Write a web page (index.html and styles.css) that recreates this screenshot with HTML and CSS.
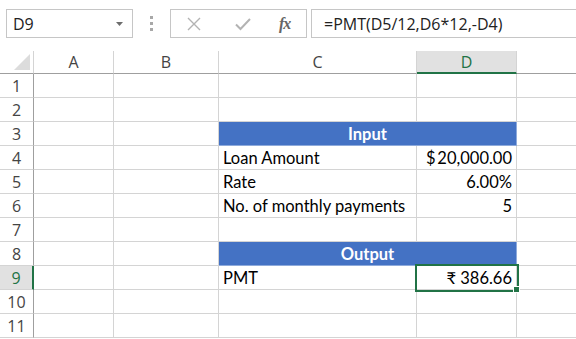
FILE: index.html
```html
<!DOCTYPE html>
<html lang="en">
<head>
    <meta charset="UTF-8">
    <title>PMT - Sheet</title>
    <link rel="stylesheet" href="styles.css">
</head>
<body>
    <div class="bar">
        <div class="namebox">
            <span>D9</span>
            <svg class="caret" width="7" height="4" viewBox="0 0 7 4"><path d="M0 0h7L3.5 4z" fill="#6d6d6d"/></svg>
        </div>
        <div class="grip"><i></i><i></i><i></i></div>
        <div class="btns">
            <svg width="14" height="14" viewBox="0 0 14 14"><path d="M1 1L13 13M13 1L1 13" stroke="#b3b3b3" stroke-width="1.4"/></svg>
            <svg width="16" height="14" viewBox="0 0 16 14"><path d="M1 7.5L5.5 12L15 2" stroke="#b3b3b3" stroke-width="2" fill="none"/></svg>
            <span class="fx">fx</span>
        </div>
        <div class="formula">=PMT(D5/12,D6*12,-D4)</div>
    </div>

    <div class="sheet">
        <div class="row head">
            <div class="rh corner"><span class="tri"></span></div>
            <div class="c a">A</div>
            <div class="c b">B</div>
            <div class="c cc">C</div>
            <div class="c d sel">D</div>
            <div class="c e"></div>
        </div>
        <div class="row"><div class="rh">1</div><div class="c a"></div><div class="c b"></div><div class="c cc"></div><div class="c d"></div><div class="c e"></div></div>
        <div class="row"><div class="rh">2</div><div class="c a"></div><div class="c b"></div><div class="c cc"></div><div class="c d"></div><div class="c e"></div></div>
        <div class="row"><div class="rh">3</div><div class="c a"></div><div class="c b"></div><div class="c merged">Input</div><div class="c e"></div></div>
        <div class="row"><div class="rh">4</div><div class="c a"></div><div class="c b"></div><div class="c cc">Loan Amount</div><div class="c d num money"><span>$</span><span>20,000.00</span></div><div class="c e"></div></div>
        <div class="row"><div class="rh">5</div><div class="c a"></div><div class="c b"></div><div class="c cc">Rate</div><div class="c d num">6.00%</div><div class="c e"></div></div>
        <div class="row"><div class="rh">6</div><div class="c a"></div><div class="c b"></div><div class="c cc">No. of monthly payments</div><div class="c d num">5</div><div class="c e"></div></div>
        <div class="row"><div class="rh">7</div><div class="c a"></div><div class="c b"></div><div class="c cc"></div><div class="c d"></div><div class="c e"></div></div>
        <div class="row"><div class="rh">8</div><div class="c a"></div><div class="c b"></div><div class="c merged">Output</div><div class="c e"></div></div>
        <div class="row"><div class="rh active">9</div><div class="c a"></div><div class="c b"></div><div class="c cc">PMT</div><div class="c d num cur">₹ 386.66<span class="handle"></span></div><div class="c e"></div></div>
        <div class="row"><div class="rh">10</div><div class="c a"></div><div class="c b"></div><div class="c cc"></div><div class="c d"></div><div class="c e"></div></div>
        <div class="row"><div class="rh">11</div><div class="c a"></div><div class="c b"></div><div class="c cc"></div><div class="c d"></div><div class="c e"></div></div>
    </div>
</body>
</html>
```

FILE: styles.css
```css
body { margin: 0; background: #fff; font-family: "Open Sans", "Noto Sans", sans-serif; color: #222; overflow: hidden; }

.bar { display: flex; align-items: flex-start; height: 51px; padding: 9px 0 0 6px; box-sizing: border-box; }
.namebox { width: 127px; height: 29px; box-sizing: border-box; border: 1px solid #c6c6c6; display: flex; align-items: center; justify-content: space-between; padding: 0 9px 0 6px; font-size: 16px; color: #222; }
.grip { width: 37px; height: 29px; display: flex; flex-direction: column; align-items: center; justify-content: center; gap: 3px; }
.grip i { display: block; width: 3px; height: 3px; background: #a8a8a8; }
.btns { width: 137px; height: 29px; box-sizing: border-box; border: 1px solid #c6c6c6; display: flex; align-items: center; padding-left: 16px; }
.btns svg:nth-child(2) { margin-left: 34px; }
.fx { margin-left: 28px; font-family: "Liberation Serif", serif; font-style: italic; font-weight: bold; font-size: 16px; color: #666; letter-spacing: -1px; }
.formula { flex: 1; height: 29px; box-sizing: border-box; border: 1px solid #c6c6c6; border-right: none; margin-left: 4px; display: flex; align-items: center; padding-left: 12px; font-size: 16px; color: #222; }

.sheet { font-family: "Lato", "Liberation Sans", sans-serif; font-size: 16.5px; color: #000; }
.row { display: flex; height: 24px; }
.row > div { box-sizing: border-box; height: 24px; border-right: 1px solid #d4d4d4; border-bottom: 1px solid #d4d4d4; }
.rh { width: 34px; border-right: 1px solid #9f9f9f !important; display: flex; align-items: center; justify-content: center; font-family: "Open Sans", sans-serif; font-size: 16px; color: #444; }
.c { display: flex; align-items: center; padding: 0 4px; }
.a { width: 80px; }
.b { width: 105px; }
.cc { width: 198px; }
.d { width: 100px; }
.e { flex: 1; border-right: none !important; }
.merged { width: 298px; background: #4472c4; color: #fff; font-weight: bold; justify-content: center; border-color: #8eaadb !important; }

.head { height: 23px; }
.head > div { height: 23px; border-bottom: 1px solid #9f9f9f; justify-content: center; font-family: "Open Sans", sans-serif; color: #444; font-size: 16px; }
.head .rh { border-right: 1px solid #d4d4d4 !important; }
.corner { position: relative; }
.tri { position: absolute; right: 3px; bottom: 3px; width: 0; height: 0; border-left: 16px solid transparent; border-bottom: 16px solid #dcdcdc; }
.head .sel { background: #e1e1e1; border-bottom: 2px solid #217346; color: #217346; }

.num { justify-content: flex-end; }
.money { justify-content: space-between; padding-left: 9px; }
.rh.active { background: #e1e1e1; border-right: 2px solid #217346 !important; color: #217346; }
.cur { position: relative; z-index: 1; outline: 2px solid #217346; outline-offset: 0; }
.handle { position: absolute; right: -4px; bottom: -4px; width: 5px; height: 5px; background: #217346; border: 1px solid #fff; }
```
